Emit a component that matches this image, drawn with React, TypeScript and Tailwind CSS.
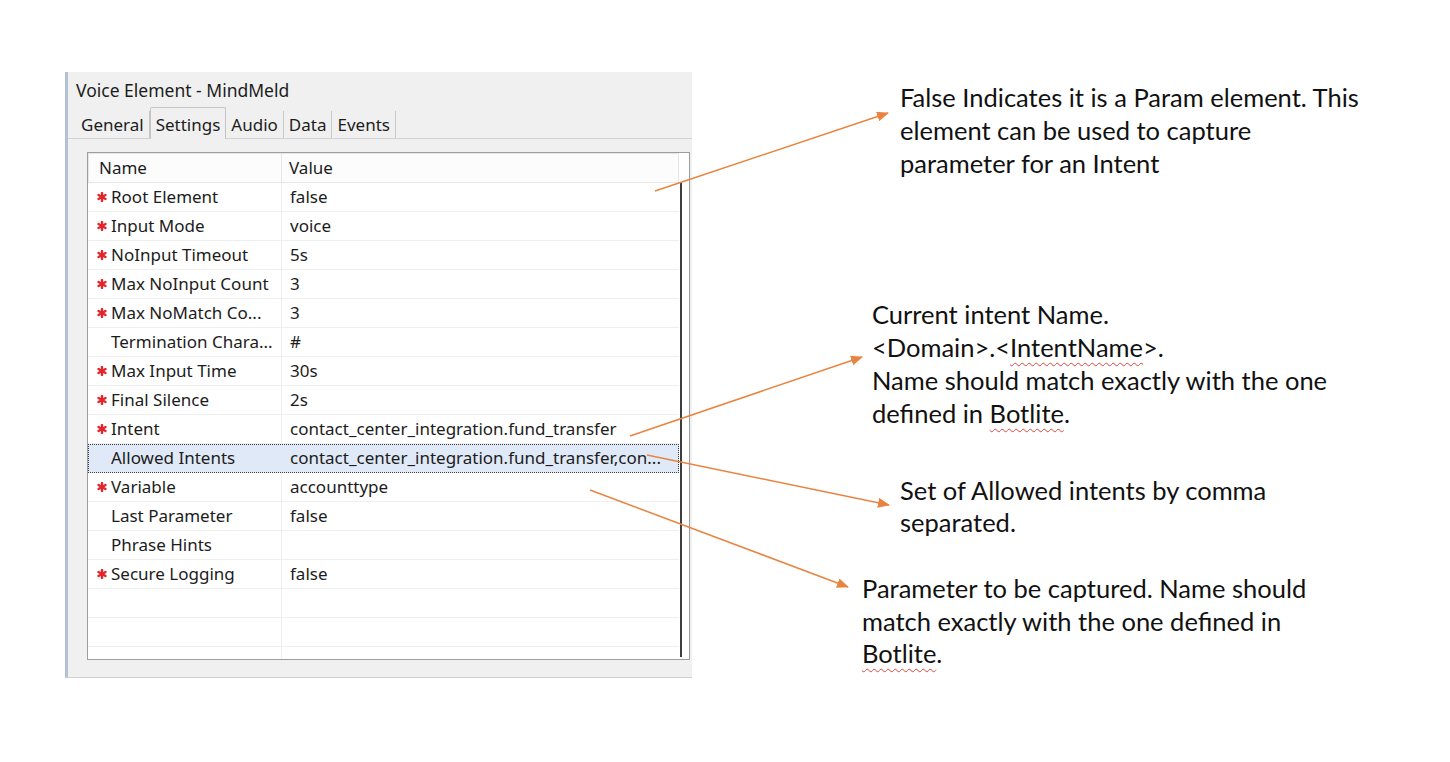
const rows: { name: string; value: string; req: boolean; selected?: boolean }[] = [
  { name: 'Root Element', value: 'false', req: true },
  { name: 'Input Mode', value: 'voice', req: true },
  { name: 'NoInput Timeout', value: '5s', req: true },
  { name: 'Max NoInput Count', value: '3', req: true },
  { name: 'Max NoMatch Co...', value: '3', req: true },
  { name: 'Termination Chara...', value: '#', req: false },
  { name: 'Max Input Time', value: '30s', req: true },
  { name: 'Final Silence', value: '2s', req: true },
  { name: 'Intent', value: 'contact_center_integration.fund_transfer', req: true },
  { name: 'Allowed Intents', value: 'contact_center_integration.fund_transfer,con...', req: false, selected: true },
  { name: 'Variable', value: 'accounttype', req: true },
  { name: 'Last Parameter', value: 'false', req: false },
  { name: 'Phrase Hints', value: '', req: false },
  { name: 'Secure Logging', value: 'false', req: true },
  { name: '', value: '', req: false },
  { name: '', value: '', req: false },
  { name: '', value: '', req: false },
]

const tabs = ['General', 'Settings', 'Audio', 'Data', 'Events']

const Star = () => (
  <svg width="10" height="10" viewBox="0 0 10 10" className="shrink-0">
    <g stroke="#e3262b" strokeWidth="2.4" strokeLinecap="round">
      <line x1="5" y1="1" x2="5" y2="9" />
      <line x1="1.5" y1="3" x2="8.5" y2="7" />
      <line x1="1.5" y1="7" x2="8.5" y2="3" />
    </g>
  </svg>
)

const Squiggle = ({ children }: { children: React.ReactNode }) => (
  <span className="underline decoration-wavy decoration-[#e0453a] decoration-1 underline-offset-[5px]">{children}</span>
)

const App = () => {
  return (
    <div className="w-[1450px] h-[762px] bg-white relative overflow-hidden text-[#111]">
      {/* Property panel screenshot */}
      <div className="pt-[72px] pl-[65px] font-['Noto_Sans',sans-serif] text-[17px] text-[#1c1c1c]">
        <div className="w-[627px] h-[606px] bg-[#f0f0f0] border-l-[3px] border-l-[#b3c1d6] border-b border-b-[#cfcfcf] flex flex-col">
          <div className="h-[36px] pl-[8px] pt-[6px] leading-[24px] text-[17.5px] whitespace-nowrap">Voice Element - MindMeld</div>

          {/* Tabs */}
          <div className="h-[31px] flex items-end border-b border-[#d2d2d2] pl-[8px]">
            {tabs.map((t) =>
              t === 'Settings' ? (
                <div
                  key={t}
                  className="h-[32px] -mb-px px-[5px] pt-[3px] flex items-center bg-[#f0f0f0] border border-b-0 border-[#c4c4c4] rounded-t-[2px]"
                >
                  {t}
                </div>
              ) : (
                <div key={t} className="h-[27px] px-[5px] pt-[1px] flex items-center border-r border-[#c8c8c8]">
                  {t}
                </div>
              )
            )}
          </div>

          {/* Table */}
          <div className="flex-1 mt-[13px] ml-[19px] mr-[2px] mb-[17px] border border-[#9b9da1] bg-white flex overflow-hidden">
            <div className="flex-1 flex flex-col overflow-hidden">
              <div className="h-[30px] shrink-0 flex border border-[#e6e6e6] bg-[#fcfcfc]">
                <div className="w-[193px] pl-[10px] flex items-center border-r border-[#e6e6e6]">Name</div>
                <div className="flex-1 pl-[7px] flex items-center">Value</div>
              </div>
              {rows.map((r, i) => (
                <div
                  key={i}
                  className={`h-[29px] shrink-0 flex border-b border-[#efefef] whitespace-nowrap ${
                    r.selected ? 'bg-[#dfe9f8] outline-1 outline-dotted outline-[#3a3a3a] -outline-offset-1' : ''
                  }`}
                >
                  <div className={`w-[194px] flex items-center pl-[9px] gap-[4px] border-r ${r.selected ? 'border-transparent' : 'border-[#efefef]'}`}>
                    <span className="w-[10px] flex items-center">{r.req && <Star />}</span>
                    <span>{r.name}</span>
                  </div>
                  <div className="flex-1 pl-[8px] flex items-center overflow-hidden">{r.value}</div>
                </div>
              ))}
            </div>
            <div className="w-[10px] shrink-0 pt-[30px] pb-[2px] flex">
              <div className="w-[2px] bg-[#3d3d3d] ml-[1px]" />
            </div>
          </div>
        </div>
      </div>

      {/* Callout arrows */}
      <svg className="absolute inset-0 pointer-events-none" width="1450" height="762">
        <defs>
          <marker id="head" markerWidth="12" markerHeight="10" refX="11" refY="5" orient="auto" markerUnits="userSpaceOnUse">
            <path d="M0,0 L12,5 L0,10 Z" fill="#e8843f" />
          </marker>
        </defs>
        <g stroke="#e8843f" strokeWidth="1.5" fill="none">
          <line x1="655" y1="191" x2="888" y2="113" markerEnd="url(#head)" />
          <line x1="630" y1="436" x2="862" y2="357" markerEnd="url(#head)" />
          <line x1="647" y1="455" x2="889" y2="505" markerEnd="url(#head)" />
          <line x1="590" y1="490" x2="848" y2="587" markerEnd="url(#head)" />
        </g>
      </svg>

      {/* Callout texts */}
      <div className="font-['Lato',sans-serif] text-[25.5px] leading-[33px] whitespace-nowrap">
        <div className="absolute left-[900px] top-[81px]">
          False Indicates it is a Param element. This
          <br />
          element can be used to capture
          <br />
          parameter for an Intent
        </div>
        <div className="absolute left-[872px] top-[298px]">
          Current intent Name.
          <br />
          &lt;Domain&gt;.&lt;<Squiggle>IntentName</Squiggle>&gt;.
          <br />
          Name should match exactly with the one
          <br />
          defined in <Squiggle>Botlite</Squiggle>.
        </div>
        <div className="absolute left-[900px] top-[474px] leading-[32px]">
          Set of Allowed intents by comma
          <br />
          separated.
        </div>
        <div className="absolute left-[862px] top-[572px] leading-[32.5px]">
          Parameter to be captured. Name should
          <br />
          match exactly with the one defined in
          <br />
          <Squiggle>Botlite</Squiggle>.
        </div>
      </div>
    </div>
  )
}

export default App
